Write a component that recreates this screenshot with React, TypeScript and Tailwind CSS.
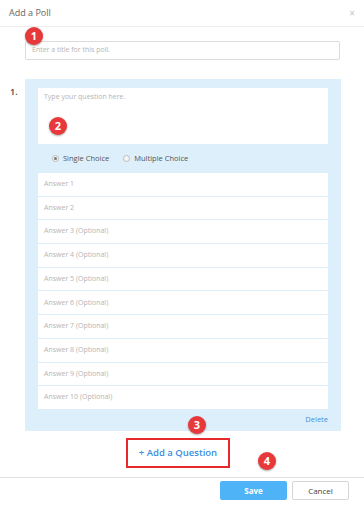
import React from "react";

const ANSWERS = [
  "Answer 1",
  "Answer 2",
  "Answer 3 (Optional)",
  "Answer 4 (Optional)",
  "Answer 5 (Optional)",
  "Answer 6 (Optional)",
  "Answer 7 (Optional)",
  "Answer 8 (Optional)",
  "Answer 9 (Optional)",
  "Answer 10 (Optional)",
];

function Badge({ n, className }: { n: number; className: string }) {
  return (
    <span
      className={
        "absolute flex h-[18px] w-[18px] items-center justify-center rounded-full bg-[#e8393a] text-[11px] font-bold text-white shadow-[0_1px_2px_rgba(0,0,0,0.35)] " +
        className
      }
    >
      {n}
    </span>
  );
}

function Radio({ checked, label }: { checked?: boolean; label: string }) {
  return (
    <label className="flex items-center gap-[4px]">
      <span className="flex h-[7px] w-[7px] items-center justify-center rounded-full border border-[#bbb] bg-[#f4f4f4]">
        {checked && <span className="h-[3px] w-[3px] rounded-full bg-[#777]" />}
      </span>
      <span>{label}</span>
    </label>
  );
}

export default function App() {
  return (
    <div
      className="relative flex h-[506px] w-[364px] flex-col overflow-hidden bg-white text-[#555]"
      style={{ fontFamily: '"Open Sans", "Liberation Sans", sans-serif' }}
    >
      {/* Header */}
      <div className="flex h-[27px] items-center justify-between border-b border-[#ececec] pl-[9px] pr-[9px]">
        <span className="text-[9px] text-[#666]">Add a Poll</span>
        <span className="text-[10px] leading-none text-[#c4c4c4]">×</span>
      </div>

      {/* Body */}
      <div className="flex-1 pt-[14px]">
        <div className="ml-[25px] mr-[24px] flex h-[19px] items-center rounded-[2px] border border-[#dcdcdc] px-[6px] text-[7px] text-[#b5b5b5]">
          Enter a title for this poll.
        </div>

        <div className="mt-[19px] flex">
          <span className="w-[25px] pl-[10px] pt-[6px] text-[9px] font-semibold text-[#444]">1.</span>
          <div className="w-[316px] bg-[#ddeffb] px-[13px] pt-[9px]">
            <div className="h-[56px] bg-white px-[6px] pt-[4px] text-[7px] text-[#b5b5b5]">
              Type your question here.
            </div>
            <div className="flex h-[29px] items-center gap-[14px] pl-[14px] text-[7.5px] text-[#555]">
              <Radio checked label="Single Choice" />
              <Radio label="Multiple Choice" />
            </div>
            <div className="flex flex-col gap-[1px] bg-[#ddeffb]">
              {ANSWERS.map((a) => (
                <div key={a} className="flex h-[22.7px] items-center bg-white px-[6px] text-[7px] text-[#b5b5b5]">
                  {a}
                </div>
              ))}
            </div>
            <div className="flex h-[22px] items-center justify-end text-[7.5px] text-[#4a90d9]">Delete</div>
          </div>
        </div>

        <div className="mt-[7px] ml-[126px] flex h-[30px] w-[104px] items-center justify-center border-2 border-[#e8292b] text-[9.5px] font-semibold text-[#3b8ee0]">
          + Add a Question
        </div>
      </div>

      {/* Footer */}
      <div className="flex h-[29px] items-start justify-end gap-[5px] border-t border-[#e2e2e2] pr-[15px] pt-[3px]">
        <button className="flex h-[19px] w-[67px] items-center justify-center rounded-[2px] bg-[#4fb4f7] text-[8px] font-bold text-white">
          Save
        </button>
        <button className="flex h-[19px] w-[57px] items-center justify-center rounded-[2px] border border-[#d6d6d6] bg-white text-[8px] text-[#444]">
          Cancel
        </button>
      </div>

      <Badge n={1} className="left-[25px] top-[27px]" />
      <Badge n={2} className="left-[49px] top-[117px]" />
      <Badge n={3} className="left-[188px] top-[416px]" />
      <Badge n={4} className="left-[258px] top-[452px]" />
    </div>
  );
}
